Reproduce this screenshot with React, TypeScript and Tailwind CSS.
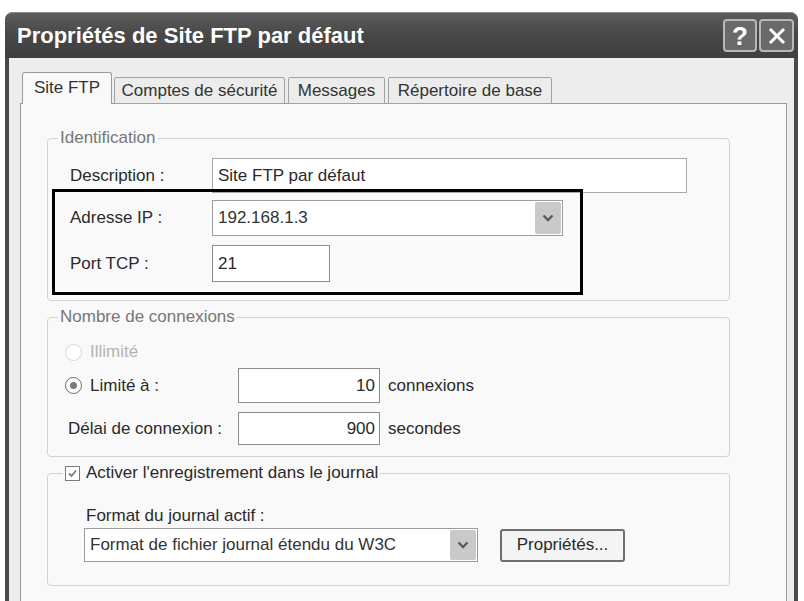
import React from "react";

const font = "font-['Liberation_Sans',Arial,sans-serif]";

function Chevron() {
  return (
    <svg width="12" height="8" viewBox="0 0 12 8" className="block">
      <path d="M1.5 1.5 L6 6 L10.5 1.5" fill="none" stroke="#5a5a5a" strokeWidth="2.4" />
    </svg>
  );
}

function Combo({ value, width, height }: { value: string; width: string; height: string }) {
  return (
    <div className={`${width} ${height} flex items-center border border-[#9c9c9c] bg-white`}>
      <span className="flex-1 truncate pl-[5px] text-[#333]">{value}</span>
      <div className="mr-px flex h-[calc(100%-2px)] w-[26px] items-center justify-center rounded-[2px] bg-[#c9c9c9]">
        <Chevron />
      </div>
    </div>
  );
}

function Radio({ checked, disabled }: { checked?: boolean; disabled?: boolean }) {
  return (
    <span
      className={`flex h-[17px] w-[17px] items-center justify-center rounded-full border-[1.5px] bg-white ${
        disabled ? "border-[#d6d6d6]" : "border-[#6a6a6a]"
      }`}
    >
      {checked && <span className="h-[7px] w-[7px] rounded-full bg-[#7a7a7a]" />}
    </span>
  );
}

export default function App() {
  return (
    <div className={`h-[601px] w-[804px] overflow-hidden bg-white pl-[5px] pt-[12px] text-[17px] leading-[20px] ${font}`}>
      <div className="flex h-[620px] w-[793px] flex-col rounded-t-[8px] bg-[#4a4a4a]">
        {/* title bar */}
        <div className="flex h-[46px] shrink-0 items-center rounded-t-[8px] border-t border-[#8a8a8a] bg-gradient-to-b from-[#5c5c5c] via-[#474747] to-[#3f3f3f] pl-[12px] pr-[4px]">
          <span className="flex-1 text-[22px] font-bold text-white">Propriétés de Site FTP par défaut</span>
          <div className="flex gap-[2px]">
            <div className="flex h-[33px] w-[34px] items-center justify-center rounded-[4px] border-2 border-[#b8b8b8] bg-[#6a6a6a] text-[26px] font-bold leading-none text-white">
              ?
            </div>
            <div className="flex h-[33px] w-[35px] items-center justify-center rounded-[4px] border-2 border-[#b8b8b8] bg-[#6a6a6a]">
              <svg width="20" height="20" viewBox="0 0 20 20">
                <path d="M3 3 L17 17 M17 3 L3 17" stroke="#fff" strokeWidth="3" />
              </svg>
            </div>
          </div>
        </div>

        {/* dialog body */}
        <div className="mx-[4px] flex-1 bg-[#ededed] pl-[11px] pt-[14px]">
          {/* tabs */}
          <div className="relative z-10 -mb-px flex h-[32px] items-end pl-[2px] text-[#333]">
            <div className="flex h-[32px] w-[90px] items-center justify-center rounded-t-[3px] border border-b-0 border-[#9a9a9a] bg-[#f9f9f9] pb-[2px]">
              Site FTP
            </div>
            <div className="ml-[2px] flex h-[27px] w-[171px] items-center justify-center rounded-t-[2px] border border-[#a3a3a3] bg-[#ececec]">
              Comptes de sécurité
            </div>
            <div className="ml-[3px] flex h-[27px] w-[97px] items-center justify-center rounded-t-[2px] border border-[#a3a3a3] bg-[#ececec]">
              Messages
            </div>
            <div className="ml-[3px] flex h-[27px] w-[164px] items-center justify-center rounded-t-[2px] border border-[#a3a3a3] bg-[#ececec]">
              Répertoire de base
            </div>
          </div>

          {/* tab panel */}
          <div className="h-[520px] w-[767px] border border-[#9a9a9a] bg-[#f9f9f9] pl-[26px] pt-[24px] text-[#2a2a2a]">
            {/* Identification */}
            <fieldset className="w-[683px] rounded-[4px] border border-[#d2d2d2] pb-[5px]">
              <legend className="ml-[10px] px-[2px] text-[#777]">Identification</legend>
              <div className="flex items-center pl-[22px] pt-[10px]">
                <span className="w-[142px]">Description :</span>
                <div className="flex h-[35px] w-[475px] items-center border border-[#a8a8a8] bg-white pl-[5px]">
                  Site FTP par défaut
                </div>
              </div>
              <div className="relative ml-[4px] -mt-[4px] flex w-[531px] flex-col gap-[9px] border-[3px] border-black pb-[10px] pl-[15px] pt-[8px]">
                <div className="flex items-center">
                  <span className="w-[142px]">Adresse IP :</span>
                  <Combo value="192.168.1.3" width="w-[351px]" height="h-[36px]" />
                </div>
                <div className="flex items-center">
                  <span className="w-[142px]">Port TCP :</span>
                  <div className="flex h-[37px] w-[118px] items-center border border-[#8c8c8c] bg-white pl-[5px]">21</div>
                </div>
              </div>
            </fieldset>

            {/* Nombre de connexions */}
            <fieldset className="mt-[6px] w-[683px] rounded-[4px] border border-[#d2d2d2] pb-[11px] pl-[17px]">
              <legend className="-ml-[7px] px-[2px] text-[#777]">Nombre de connexions</legend>
              <div className="flex h-[26px] items-center gap-[8px] pt-0 text-[#b4b4b4] mt-[12px]">
                <Radio disabled />
                <span>Illimité</span>
              </div>
              <div className="mt-[3px] flex items-center">
                <div className="flex w-[173px] items-center gap-[8px]">
                  <Radio checked />
                  <span>Limité à :</span>
                </div>
                <div className="flex h-[35px] w-[142px] items-center justify-end border border-[#8c8c8c] bg-white pr-[4px]">10</div>
                <span className="ml-[8px]">connexions</span>
              </div>
              <div className="mt-[9px] flex items-center">
                <span className="w-[173px] pl-[3px]">Délai de connexion :</span>
                <div className="flex h-[33px] w-[142px] items-center justify-end border border-[#8c8c8c] bg-white pr-[4px]">900</div>
                <span className="ml-[8px]">secondes</span>
              </div>
            </fieldset>

            {/* Journal */}
            <fieldset className="mt-[6px] w-[683px] rounded-[4px] border border-[#d2d2d2] pb-[23px] pl-[36px]">
              <legend className="-ml-[21px] flex items-center gap-[6px] px-[2px]">
                <span className="flex h-[15px] w-[15px] items-center justify-center border border-[#7a7a7a] bg-white">
                  <svg width="11" height="11" viewBox="0 0 11 11">
                    <path d="M2 5.5 L4.5 8 L9 2.5" fill="none" stroke="#7a7a7a" strokeWidth="1.8" />
                  </svg>
                </span>
                <span>Activer l'enregistrement dans le journal</span>
              </legend>
              <div className="ml-[2px] pt-[23px]">Format du journal actif :</div>
              <div className="mt-[2px] flex items-center">
                <Combo value="Format de fichier journal étendu du W3C" width="w-[394px]" height="h-[34px]" />
                <div className="ml-[22px] flex h-[33px] w-[125px] items-center justify-center rounded-[3px] border-2 border-[#6e6e6e] bg-[#f4f4f4]">
                  Propriétés...
                </div>
              </div>
            </fieldset>
          </div>
        </div>
      </div>
    </div>
  );
}
